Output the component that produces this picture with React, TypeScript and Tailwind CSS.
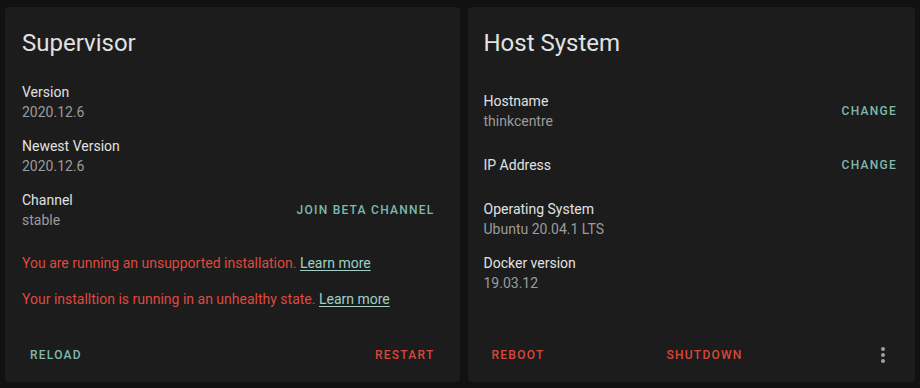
import React from 'react';

interface InfoRowProps {
  label: string;
  value?: string;
  action?: string;
}

const InfoRow: React.FC<InfoRowProps> = ({ label, value, action }) => {
  return (
    <div className="flex min-h-[40px] items-center justify-between">
      <div className="flex flex-col">
        <span className="text-[14px] leading-5 text-[#e1e1e1]">{label}</span>
        {value && <span className="text-[14px] leading-5 text-[#9b9b9b]">{value}</span>}
      </div>
      {action && <ActionButton label={action} tone="primary" />}
    </div>
  );
};

const ActionButton: React.FC<{ label: string; tone: 'primary' | 'danger' }> = ({ label, tone }) => {
  return (
    <button
      className={
        'h-9 px-2 text-[12px] font-medium uppercase tracking-[1.25px] ' +
        (tone === 'primary' ? 'text-[#7fb8ae]' : 'text-[#d9463b]')
      }
    >
      {label}
    </button>
  );
};

const LearnMore = () => <a className="text-[#9fcfc6] underline underline-offset-2">Learn more</a>;

const SupervisorCard = () => {
  return (
    <div className="flex w-[455px] flex-col rounded bg-[#1c1c1c] px-[17px] pt-5 pb-[9px]">
      <h2 className="text-[24px] leading-8 text-[#e1e1e1]">Supervisor</h2>
      <div className="mt-[23px] flex flex-col gap-[14px]">
        <InfoRow label="Version" value="2020.12.6" />
        <InfoRow label="Newest Version" value="2020.12.6" />
        <div className="flex items-center justify-between">
          <div className="flex flex-col">
            <span className="text-[14px] leading-5 text-[#e1e1e1]">Channel</span>
            <span className="text-[14px] leading-5 text-[#9b9b9b]">stable</span>
          </div>
          <ActionButton label="Join beta channel" tone="primary" />
        </div>
      </div>
      <div className="mt-[23px] flex flex-col gap-4 text-[14px] leading-5 text-[#df4a3e]">
        <p>
          You are running an unsupported installation. <LearnMore />
        </p>
        <p>
          Your installtion is running in an unhealthy state. <LearnMore />
        </p>
      </div>
      <div className="mt-auto flex items-center justify-between">
        <ActionButton label="Reload" tone="primary" />
        <ActionButton label="Restart" tone="danger" />
      </div>
    </div>
  );
};

const HostCard = () => {
  return (
    <div className="flex w-[448px] flex-col rounded bg-[#1c1c1c] pl-4 pr-[10px] pt-5 pb-[9px]">
      <h2 className="text-[24px] leading-8 text-[#e1e1e1]">Host System</h2>
      <div className="mt-8 flex flex-col gap-[14px]">
        <InfoRow label="Hostname" value="thinkcentre" action="Change" />
        <InfoRow label="IP Address" action="Change" />
        <InfoRow label="Operating System" value="Ubuntu 20.04.1 LTS" />
        <InfoRow label="Docker version" value="19.03.12" />
      </div>
      <div className="mt-auto flex items-center">
        <div className="flex flex-1 items-center">
          <ActionButton label="Reboot" tone="danger" />
          <div className="ml-[106px]">
            <ActionButton label="Shutdown" tone="danger" />
          </div>
        </div>
        <button className="mr-1 flex h-9 w-9 items-center justify-center text-[#a0a0a0]">
          <svg width="24" height="24" viewBox="0 0 24 24" fill="currentColor">
            <path d="M12,16A2,2 0 0,1 14,18A2,2 0 0,1 12,20A2,2 0 0,1 10,18A2,2 0 0,1 12,16M12,10A2,2 0 0,1 14,12A2,2 0 0,1 12,14A2,2 0 0,1 10,12A2,2 0 0,1 12,10M12,4A2,2 0 0,1 14,6A2,2 0 0,1 12,8A2,2 0 0,1 10,6A2,2 0 0,1 12,4Z" />
          </svg>
        </button>
      </div>
    </div>
  );
};

export default function App() {
  return (
    <div
      className="flex h-[388px] w-[920px] gap-2 bg-[#111111] px-[5px] pt-[7px] pb-[6px]"
      style={{ fontFamily: 'Roboto, "Noto Sans", sans-serif' }}
    >
      <SupervisorCard />
      <HostCard />
    </div>
  );
}
